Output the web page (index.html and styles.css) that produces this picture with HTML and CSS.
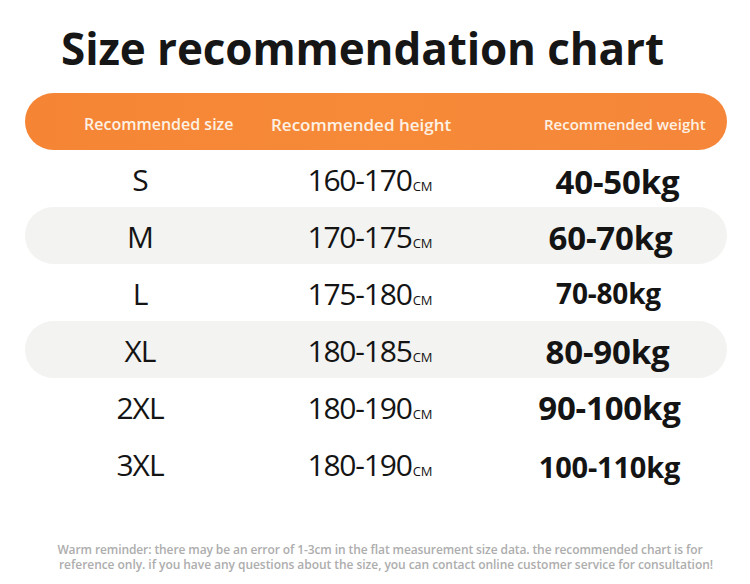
FILE: index.html
```html
<!DOCTYPE html>
<html lang="en">
<head>
<meta charset="utf-8">
<title>Size recommendation chart</title>
<link rel="stylesheet" href="styles.css">
</head>
<body>
<div class="page">
  <h1 class="title">Size recommendation chart</h1>
  <div class="header">
    <div class="hcell h1">Recommended size</div>
    <div class="hcell h2">Recommended height</div>
    <div class="hcell h3">Recommended weight</div>
  </div>
  <div class="rows">
    <div class="row">
      <div class="size">S</div>
      <div class="height">160-170<span class="unit">CM</span></div>
      <div class="weight w-s">40-50kg</div>
    </div>
    <div class="row band">
      <div class="size">M</div>
      <div class="height">170-175<span class="unit">CM</span></div>
      <div class="weight w-m">60-70kg</div>
    </div>
    <div class="row">
      <div class="size">L</div>
      <div class="height">175-180<span class="unit">CM</span></div>
      <div class="weight w-l">70-80kg</div>
    </div>
    <div class="row band">
      <div class="size">XL</div>
      <div class="height">180-185<span class="unit">CM</span></div>
      <div class="weight w-xl">80-90kg</div>
    </div>
    <div class="row">
      <div class="size">2XL</div>
      <div class="height">180-190<span class="unit">CM</span></div>
      <div class="weight w-2xl">90-100kg</div>
    </div>
    <div class="row">
      <div class="size">3XL</div>
      <div class="height">180-190<span class="unit">CM</span></div>
      <div class="weight w-3xl">100-110kg</div>
    </div>
  </div>
  <div class="note">
    <p class="note-line l1">Warm reminder: there may be an error of 1-3cm in the flat measurement size data. the recommended chart is for</p>
    <p class="note-line l2">reference only. if you have any questions about the size, you can contact online customer service for consultation!</p>
  </div>
</div>
</body>
</html>
```
FILE: styles.css
```css
* { box-sizing: border-box; }
html, body {
  margin: 0;
  padding: 0;
  background: #ffffff;
}
body {
  font-family: "Open Sans", "Noto Sans", sans-serif;
  color: #141414;
}
.page {
  width: 750px;
  height: 584px;
  overflow: hidden;
  padding-top: 20px;
}
.title {
  margin: 0;
  padding-left: 61px;
  font-size: 44px;
  line-height: 56px;
  font-weight: 700;
  letter-spacing: -0.1px;
  color: #161616;
}
.header {
  margin: 17px 23px 0 25px;
  height: 57px;
  border-radius: 29px;
  background: linear-gradient(90deg, #f58535 0%, #f68a38 50%, #f5863a 100%);
  display: grid;
  grid-template-columns: 230px 230px 1fr;
  align-items: center;
  color: #fdf1e4;
  font-weight: 600;
  padding-top: 5px;
}
.h1 { padding-left: 59px; font-size: 16px; }
.h2 { padding-left: 16px; font-size: 17px; }
.h3 { padding-left: 59px; font-size: 15px; }
.rows {
  margin: 0 23px 0 25px;
}
.row {
  height: 57px;
  display: grid;
  grid-template-columns: 230px 230px 1fr;
  align-items: center;
  text-align: center;
  padding-top: 1px;
}
.band {
  background: #f3f3f1;
  border-radius: 29px;
}
.size {
  font-size: 30px;
  font-weight: 400;
  letter-spacing: -1px;
}
.height {
  font-size: 30px;
  font-weight: 400;
  letter-spacing: -1.2px;
}
.unit {
  font-size: 13px;
  letter-spacing: 0;
  margin-left: 1px;
}
.weight {
  font-weight: 700;
  font-size: 33px;
  letter-spacing: -0.2px;
  padding-left: 9px;
}
.w-s { font-size: 33px; padding-left: 23px; padding-top: 5px; }
.w-m { font-size: 33px; padding-left: 9px; padding-top: 2px; }
.w-l { font-size: 28px; padding-left: 5px; }
.w-xl { font-size: 33px; padding-left: 3px; padding-top: 3px; }
.w-2xl { font-size: 33px; padding-left: 7px; padding-top: 1px; }
.w-3xl { font-size: 29px; padding-left: 7px; padding-top: 4px; }
.note {
  margin-top: 50px;
  color: #adadad;
  font-size: 12px;
  font-weight: 600;
  display: flex;
  flex-direction: column;
  align-items: center;
}
.note-line {
  margin: 0;
  line-height: 15px;
  white-space: nowrap;
}
.l1 { letter-spacing: -0.1px; padding-left: 10px; }
.l2 { letter-spacing: -0.05px; padding-left: 22px; }
```
